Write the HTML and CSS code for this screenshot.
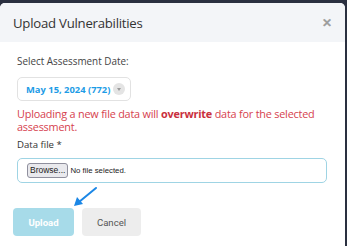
FILE: index.html
```html
<!DOCTYPE html>
<html>
<head>
<meta charset="utf-8">
<link rel="stylesheet" href="styles.css">
</head>
<body>
<div class="modal">
  <div class="header">
    <div class="title">Upload Vulnerabilities</div>
    <div class="close">&#x2715;</div>
  </div>
  <div class="content">
    <div class="label">Select Assessment Date:</div>
    <div class="select">
      <span class="select-text">May 15, 2024 (772)</span>
      <span class="select-btn"><svg width="4" height="3" viewBox="0 0 4 3"><path d="M0 0h4L2 3z" fill="#9a9a9a"/></svg></span>
    </div>
    <div class="warning">Uploading a new file data will <b>overwrite</b> data for the selected assessment.</div>
    <div class="label small">Data file *</div>
    <div class="file">
      <span class="browse">Browse...</span>
      <span class="nofile">No file selected.</span>
    </div>
  </div>
  <div class="footer">
    <span class="btn upload">Upload</span>
    <span class="btn cancel">Cancel</span>
    <svg class="arrow" width="30" height="24" viewBox="0 0 30 24"><path d="M24 2 L7 16" stroke="#1b87e6" stroke-width="2" stroke-linecap="round" fill="none"/><path d="M2 20 L5 11 L11 18 Z" fill="#1b87e6"/></svg>
  </div>
</div>
</body>
</html>
```
FILE: styles.css
```css
html, body { margin: 0; padding: 0; }
body {
  background: #2a3040;
  width: 347px;
  height: 246px;
  overflow: hidden;
  font-family: "Open Sans", sans-serif;
}
.modal {
  margin-top: 3px;
  margin-right: 2px;
  background: #fff;
  border-radius: 5px 5px 0 0;
  height: 243px;
}
.header {
  height: 39px;
  background: #f3f5f8;
  border-radius: 5px 5px 0 0;
  display: flex;
  align-items: center;
  justify-content: space-between;
  padding: 0 13px;
}
.title {
  font-size: 13.2px;
  color: #333;
  letter-spacing: -0.25px;
}
.close {
  font-size: 12px;
  font-weight: bold;
  color: #9b9b9b;
  font-family: "DejaVu Sans", sans-serif;
  -webkit-text-stroke: 0.6px #9b9b9b;
}
.content {
  padding: 11px 18px 0 17px;
}
.label {
  font-size: 9.9px;
  color: #444;
  line-height: 16px;
}
.select {
  margin-top: 8px;
  width: 114px;
  height: 24px;
  box-sizing: border-box;
  border: 1px solid #e2e2e2;
  border-radius: 5px;
  display: flex;
  align-items: center;
  justify-content: space-between;
  padding: 0 5px 0 8px;
}
.select-text {
  font-size: 9.4px;
  font-weight: bold;
  color: #1d9ce6;
}
.select-btn {
  width: 12px;
  height: 12px;
  border-radius: 50%;
  background: #e4e4e4;
  display: flex;
  align-items: center;
  justify-content: center;
}
.warning {
  margin-top: 6px;
  font-size: 10.85px;
  line-height: 13px;
  color: #d6414e;
  letter-spacing: -0.2px;
}
.warning b { color: #c92f3d; }
.label.small {
  margin-top: 4px;
  font-size: 9.6px;
  color: #333;
}
.file {
  margin-top: 5px;
  height: 25px;
  box-sizing: border-box;
  border: 1px solid #9fd4e4;
  border-radius: 5px;
  display: flex;
  align-items: center;
  padding-left: 9px;
  gap: 2px;
}
.browse {
  font-family: "Liberation Sans", sans-serif;
  font-size: 8.5px;
  color: #222;
  background: #e9e9ed;
  border: 1px solid #8f8f9d;
  border-radius: 3px;
  padding: 1px 2px;
  line-height: 11px;
}
.nofile {
  font-family: "Liberation Sans", sans-serif;
  font-size: 7.8px;
  color: #222;
}
.footer {
  position: relative;
  display: flex;
  gap: 8px;
  padding: 25px 0 0 13px;
}
.btn {
  height: 28px;
  border-radius: 4px;
  display: flex;
  align-items: center;
  justify-content: center;
  font-family: Roboto, sans-serif;
  font-size: 9.6px;
}
.upload {
  width: 61px;
  background: #a7dbe9;
  color: #fff;
  font-weight: bold;
}
.cancel {
  width: 59px;
  background: #ededed;
  color: #555;
}
.arrow {
  position: absolute;
  left: 72px;
  top: 3px;
}
```
